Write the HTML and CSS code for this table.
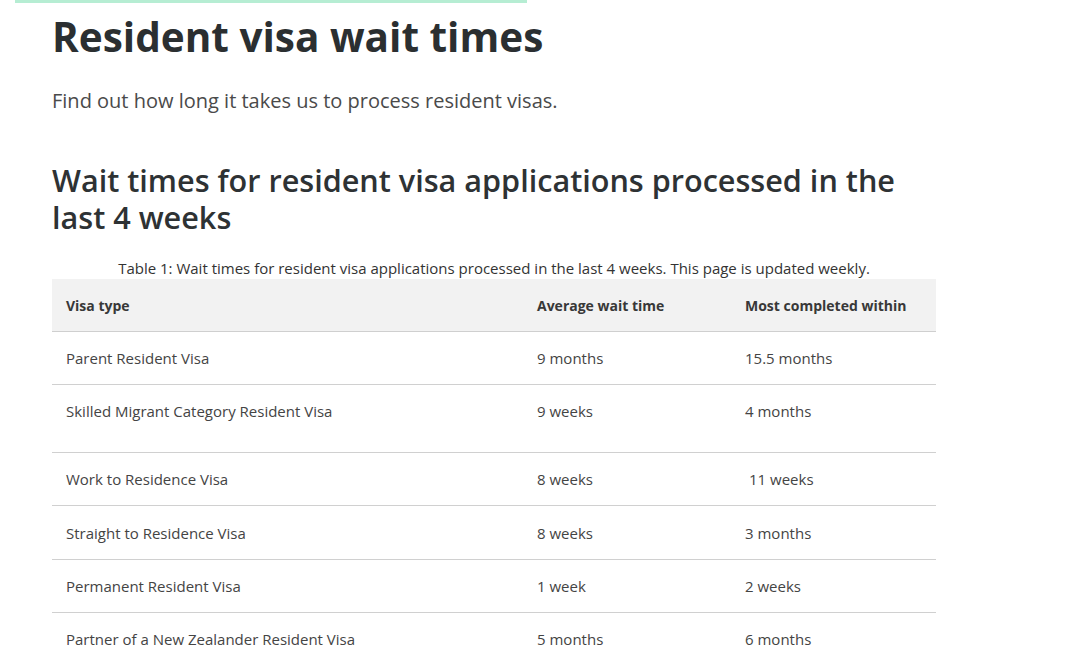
FILE: index.html
```html
<!DOCTYPE html>
<html lang="en">
<head>
<meta charset="utf-8">
<title>Resident visa wait times</title>
<link rel="stylesheet" href="styles.css">
</head>
<body>
<div class="topbar"></div>
<main class="page">
  <h1 class="title">Resident visa wait times</h1>
  <p class="intro">Find out how long it takes us to process resident visas.</p>
  <h2 class="section">Wait times for resident visa applications processed in the last 4 weeks</h2>
  <table class="waits">
    <caption>Table 1: Wait times for resident visa applications processed in the last 4 weeks. This page is updated weekly.</caption>
    <thead>
      <tr><th class="c1">Visa type</th><th class="c2">Average wait time</th><th class="c3">Most completed within</th></tr>
    </thead>
    <tbody>
      <tr><td>Parent Resident Visa</td><td>9 months</td><td>15.5 months</td></tr>
      <tr class="tall"><td>Skilled Migrant Category Resident Visa</td><td>9 weeks</td><td>4 months</td></tr>
      <tr><td>Work to Residence Visa</td><td>8 weeks</td><td><span class="nudge">11 weeks</span></td></tr>
      <tr class="r54"><td>Straight to Residence Visa</td><td>8 weeks</td><td>3 months</td></tr>
      <tr><td>Permanent Resident Visa</td><td>1 week</td><td>2 weeks</td></tr>
      <tr class="last"><td>Partner of a New Zealander Resident Visa</td><td>5 months</td><td>6 months</td></tr>
    </tbody>
  </table>
</main>
</body>
</html>
```

FILE: styles.css
```css
html, body {
  margin: 0;
  padding: 0;
  background: #ffffff;
}
body {
  font-family: "Open Sans", "Noto Sans", sans-serif;
  color: #333;
}
.topbar {
  width: 512px;
  height: 3px;
  margin-left: 15px;
  background: #b6edd3;
}
.page {
  padding-left: 52px;
  width: 884px;
}
.title {
  margin: 9px 0 0 0;
  font-size: 40.5px;
  line-height: 50px;
  font-weight: 700;
  color: #2b2f31;
}
.intro {
  margin: 26px 0 0 0;
  font-size: 20px;
  line-height: 26px;
  font-weight: 400;
  color: #4a4a4a;
}
.section {
  margin: 48px 0 0 0;
  font-size: 30.6px;
  line-height: 37px;
  font-weight: 600;
  color: #2e3234;
}
.waits {
  width: 884px;
  border-collapse: collapse;
  margin-top: 22px;
  font-size: 15px;
  color: #444;
}
.waits caption {
  font-size: 15px;
  line-height: 20px;
  padding-bottom: 1px;
  color: #333;
}
.waits th {
  background: #f2f2f2;
  text-align: left;
  font-size: 14px;
  font-weight: 700;
  height: 52px;
  padding: 0 14px;
  border-bottom: 1px solid #cfcfcf;
  vertical-align: middle;
  color: #383838;
}
.waits th.c1 { width: 443px; }
.waits th.c2 { width: 180px; }
.waits td {
  height: 52px;
  padding: 0 14px;
  border-bottom: 1px solid #d0d0d0;
  vertical-align: middle;
}
.waits tr.tall td {
  height: 68px;
  vertical-align: top;
  padding-top: 16px;
  box-sizing: border-box;
}
.waits tr.r54 td {
  height: 53px;
}
.waits tr.last td {
  border-bottom: none;
}
.nudge {
  padding-left: 4px;
}
```
